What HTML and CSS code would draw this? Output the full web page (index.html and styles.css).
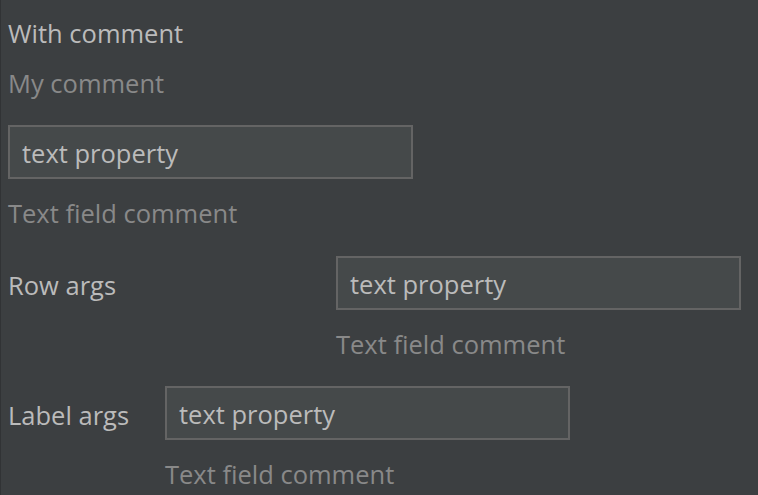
FILE: index.html
```html
<!DOCTYPE html>
<html>
<head>
<meta charset="utf-8">
<link rel="stylesheet" href="styles.css">
</head>
<body>
<div class="panel">
  <div class="line label title">With comment</div>
  <div class="line comment c-top">My comment</div>
  <div class="field f-top">text property</div>
  <div class="line comment">Text field comment</div>

  <div class="row row-args">
    <div class="line label">Row args</div>
    <div class="col">
      <div class="field">text property</div>
      <div class="line comment">Text field comment</div>
    </div>
  </div>

  <div class="row label-args">
    <div class="line label">Label args</div>
    <div class="col">
      <div class="field">text property</div>
      <div class="line comment">Text field comment</div>
    </div>
  </div>
</div>
</body>
</html>
```

FILE: styles.css
```css
html, body {
  margin: 0;
  padding: 0;
  height: 100%;
  background: #3c3f41;
}
body {
  font-family: "Open Sans", "Noto Sans", sans-serif;
  font-size: 25.5px;
  color: #bbbbbb;
  overflow: hidden;
}
.panel {
  height: 100%;
  box-sizing: border-box;
  border-left: 1px solid #313335;
  padding-left: 7px;
  display: flex;
  flex-direction: column;
}
.line {
  line-height: 32px;
  height: 32px;
  white-space: nowrap;
}
.label { color: #bbbbbb; }
.comment { color: #898989; margin-top: 18px; }
.title { margin-top: 17px; }
.c-top { margin-top: 18px; }
.field {
  box-sizing: border-box;
  width: 405px;
  height: 54px;
  background: #45494a;
  border: 2px solid #646464;
  padding: 3px 0 0 12px;
  line-height: 47px;
  color: #bbbbbb;
  white-space: nowrap;
}
.f-top { margin-top: 26px; }
.row {
  display: flex;
  align-items: flex-start;
  margin-top: 27px;
}
.row > .label { margin-top: 13px; }
.row-args > .label { width: 328px; }
.label-args > .label { width: 157px; }
.label-args { margin-top: 26px; }
.col { display: flex; flex-direction: column; }
```
